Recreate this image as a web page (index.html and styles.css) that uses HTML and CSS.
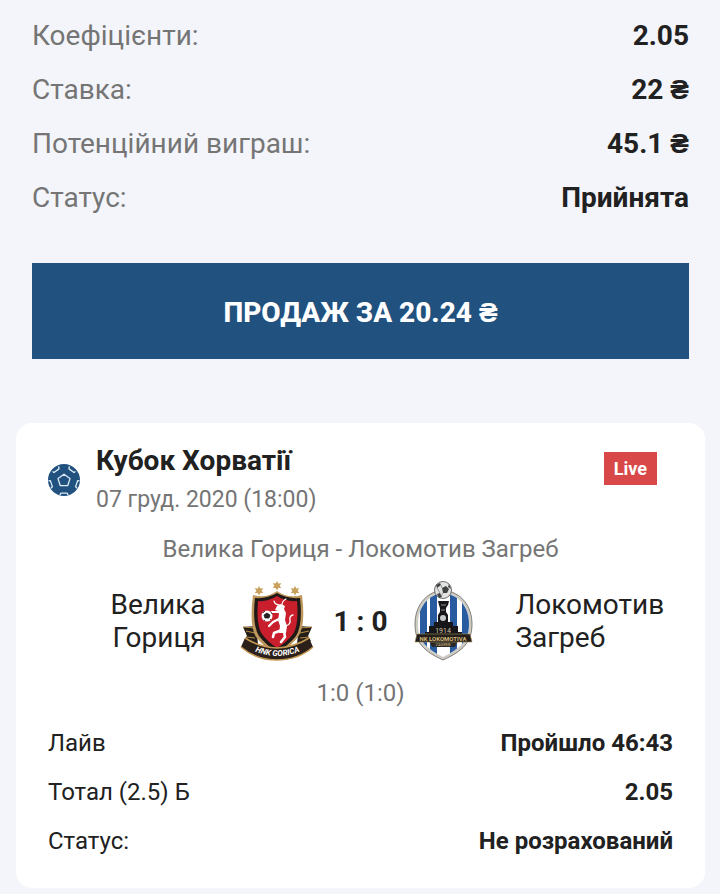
FILE: index.html
```html
<!DOCTYPE html>
<html lang="uk">
<head>
    <meta charset="UTF-8">
    <meta name="viewport" content="width=device-width, initial-scale=1.0">
    <title>Деталі ставки</title>
    <link rel="stylesheet" href="styles.css">
</head>
<body>
    <main class="bet-page">
        <!-- Bet summary -->
        <section class="bet-summary">
            <dl class="summary-list">
                <div class="summary-row">
                    <dt>Коефіцієнти:</dt>
                    <dd>2.05</dd>
                </div>
                <div class="summary-row">
                    <dt>Ставка:</dt>
                    <dd>22 ₴</dd>
                </div>
                <div class="summary-row">
                    <dt>Потенційний виграш:</dt>
                    <dd>45.1 ₴</dd>
                </div>
                <div class="summary-row">
                    <dt>Статус:</dt>
                    <dd>Прийнята</dd>
                </div>
            </dl>
            <button type="button" class="cashout-btn">ПРОДАЖ ЗА 20.24 ₴</button>
        </section>

        <!-- Match card -->
        <article class="match-card">
            <header class="match-header">
                <svg class="sport-icon" viewBox="0 0 32 32" aria-hidden="true">
                    <circle cx="16" cy="16" r="16" fill="#20517f"/>
                    <g fill="none" stroke="#dcebf5" stroke-width="1.3" stroke-linejoin="round">
                        <path d="M16 10.2l6 4.400-2.300 7.100h-7.400L10 14.600z"/>
                        <path d="M4.500 7.500l1.500 1 5-3.600-.3-2.600"/>
                        <path d="M27.500 7.500l-1.500 1-5-3.600.3-2.600"/>
                        <path d="M.4 16.800l2-.2 2 6.200-1.600 1.600"/>
                        <path d="M31.600 16.800l-2-.2-2 6.200 1.600 1.600"/>
                        <path d="M11.800 31.200l1-2h6.400l1 2"/>
                    </g>
                </svg>
                <div class="match-info">
                    <h2 class="match-title">Кубок Хорватії</h2>
                    <time class="match-date" datetime="2020-12-07T18:00">07 груд. 2020 (18:00)</time>
                </div>
                <span class="live-badge">Live</span>
            </header>

            <p class="match-name">Велика Гориця - Локомотив Загреб</p>

            <div class="scoreboard">
                <div class="team team-home">Велика Гориця</div>
                <svg class="crest" viewBox="0 0 80 80" role="img" aria-label="Велика Гориця">
                    <defs>
                        <path id="ribbonLine" d="M12 68Q39 82 67 68"/>
                    </defs>
                    <g fill="#c8a15c">
                        <path id="star" d="M39 0l1.300 2.500 3-.2-1.700 2.400 1.700 2.400-3-.2L39 9.400l-1.300-2.500-3 .2 1.700-2.400-1.700-2.400 3 .2z"/>
                        <use href="#star" x="-18" y="5"/>
                        <use href="#star" x="18" y="5"/>
                    </g>
                    <!-- side drapes -->
                    <path d="M5 46l13-1 2 18-14-3 3-5zM74 46l-13-1-2 18 14-3-3-5z" fill="#241d18"/>
                    <path d="M5 46l13 1M8 50l9 2M8 56l9 1M74 46l-13 1m10 3l-9 2m9 4l-9 1" stroke="#b58a42" stroke-width="1.2"/>
                    <!-- shield -->
                    <path d="M15 14Q28 18 39 10q11 8 25 4 4 31-4 42-8 10-21 18-13-8-21-18-7-11-3-42z" fill="#bd975b"/>
                    <path d="M17 17q12 1 22-5 10 6 23 5 3 27-4 38-7 9-19 16-11-7-18-16-7-11-4-38z" fill="#211917"/>
                    <path d="M20 20q10 1 19-5 9 6 20 5 2 24-4 33-6 8-16 14-9-6-15-14-6-9-4-33z" fill="#c91f2d"/>
                    <!-- goat with ball -->
                    <g fill="none" stroke="#fff" stroke-linecap="round" stroke-linejoin="round">
                        <path d="M42 24q-5 0-6-4M44 24q0-4 4-6" stroke-width="1.2"/>
                        <path d="M42 31l-8 0M43 37l-8 4-4 4" stroke-width="2.2"/>
                        <path d="M44 49l-8 3-1 4M46 50l1 6-4 5" stroke-width="2.6"/>
                        <path d="M48 45q5-2 4-6t3-5" stroke-width="1.3"/>
                    </g>
                    <path d="M39 25l4-2 4 2-1 3 2 4-1 7 2 6-1 7-7 0 1-7-2-6 1-6-1-3-3-1z" fill="#fff"/>
                    <circle cx="29" cy="35" r="5.5" fill="#fff"/>
                    <path d="M29 32l3 2-1 3h-4l-1-3zM25 32l2-2M33 31l1 2M26 39l1 1M32 39l1-1" fill="#222" stroke="#222" stroke-width=".8"/>
                    <!-- ribbon -->
                    <path d="M7 57q14 9 32 10 18-1 32-10l4 9q-15 13-36 13T3 66z" fill="#2b2019"/>
                    <path d="M7 57q14 9 32 10 18-1 32-10M3 66q15 13 36 13t36-13" fill="none" stroke="#c39854" stroke-width="1.6"/>
                    <text class="ribbon-text"><textPath href="#ribbonLine" startOffset="50%" text-anchor="middle">HNK GORICA</textPath></text>
                </svg>
                <strong class="score">1 : 0</strong>
                <svg class="crest" viewBox="0 0 80 80" role="img" aria-label="Локомотив Загреб">
                    <defs>
                        <clipPath id="shieldClip">
                            <path d="M40 12C24 14 15 27 15 43c0 16 7 24 25 33 18-9 26-17 26-33 0-16-9-29-26-31z"/>
                        </clipPath>
                    </defs>
                    <path d="M40 9C22 11 12 26 12 43c0 18 8 27 28 36 20-9 29-18 29-36C69 26 59 11 40 9z" fill="#cfccc6" stroke="#66645f" stroke-width=".8"/>
                    <g clip-path="url(#shieldClip)">
                        <path fill="#fff" d="M10 9h60v70H10z"/>
                        <path fill="#285b9f" d="M17 9h7v70h-7zM27 9h7v70h-7zM47 9h7v70h-7zM59 9h7v70h-7z"/>
                    </g>
                    <!-- locomotive -->
                    <path d="M35 20h11l-1 4-2 3v4l2 3v7h5v4h5v6h4v7H22v-7h4v-6h5v-4h4v-7l2-3v-4l-1-3z" fill="#171719"/>
                    <path d="M38 24h5M38 29h4" stroke="#8e9093" stroke-width="1"/>
                    <circle cx="40" cy="37" r="3" fill="#c7cacd"/>
                    <path d="M26 60h29l-3 6H29z" fill="#2c2a28"/>
                    <path d="M14 53h53l2 8H12z" fill="#231e19" stroke="#a38a5d" stroke-width=".6"/>
                    <text class="crest-year" x="40" y="52" text-anchor="middle">1914</text>
                    <text class="crest-name" x="40" y="60" text-anchor="middle">NK LOKOMOTIVA</text>
                    <text class="crest-city" x="40" y="65" text-anchor="middle">ZAGREB</text>
                    <!-- ball -->
                    <circle cx="40" cy="9" r="8.5" fill="#e2e3e2" stroke="#4c4c4b" stroke-width=".8"/>
                    <path d="M39 7l4-2 3 3-2 4h-4zM33 4l4-2 1 2-4 3zM46 3l2 5-3-2zM34 13l3-1 2 4-3 1z" fill="#414244"/>
                    <path d="M38 4l1 3m-5 0l3 5m3 0l-2 3" stroke="#777" stroke-width=".7"/>
                </svg>
                <div class="team team-away">Локомотив Загреб</div>
            </div>

            <p class="period-score">1:0 (1:0)</p>

            <dl class="detail-list">
                <div class="detail-row">
                    <dt>Лайв</dt>
                    <dd>Пройшло 46:43</dd>
                </div>
                <div class="detail-row">
                    <dt>Тотал (2.5) Б</dt>
                    <dd>2.05</dd>
                </div>
                <div class="detail-row">
                    <dt>Статус:</dt>
                    <dd>Не розрахований</dd>
                </div>
            </dl>
        </article>
    </main>
</body>
</html>
```
FILE: styles.css
```css
* {
    box-sizing: border-box;
    margin: 0;
    padding: 0;
}

body {
    background: #f4f5fa;
    color: #212121;
    font-family: Roboto, "Liberation Sans", sans-serif;
}

.bet-page {
    padding: 9px 15px 6px 16px;
}

/* Bet summary */
.bet-summary {
    padding: 0 16px;
}

.summary-row {
    display: flex;
    justify-content: space-between;
    font-size: 28px;
    line-height: 54px;
}

.summary-row dt {
    color: #757575;
}

.summary-row dd {
    font-weight: bold;
}

.cashout-btn {
    display: block;
    width: 100%;
    height: 96px;
    margin: 38px 0 64px;
    padding-top: 2px;
    border: none;
    background: #20517f;
    color: white;
    font-family: inherit;
    font-size: 28px;
    font-weight: 800;
    cursor: pointer;
}

/* Match card */
.match-card {
    padding: 18px 32px 22px;
    border-radius: 16px;
    background: white;
}

.match-header {
    display: flex;
    align-items: center;
    gap: 16px;
}

.sport-icon {
    width: 32px;
    height: 32px;
}

.match-info {
    flex: 1;
}

.match-title {
    font-size: 28px;
    font-weight: bold;
    line-height: 40px;
}

.match-date {
    display: block;
    color: #757575;
    font-size: 23px;
    line-height: 38px;
}

.live-badge {
    margin: 0 16px 24px 0;
    padding: 0 10px;
    background: #d84848;
    color: white;
    font-size: 18px;
    font-weight: bold;
    line-height: 33px;
}

.match-name,
.period-score {
    color: #757575;
    font-size: 24px;
    line-height: 32px;
    text-align: center;
}

.match-name {
    margin-top: 14px;
}

.scoreboard {
    display: grid;
    grid-template-columns: minmax(0, 1fr) 80px auto 80px minmax(0, 1fr);
    align-items: center;
    gap: 16px;
    margin-top: 16px;
}

.team {
    padding: 0 16px;
    font-size: 28px;
    line-height: 33px;
}

.team-home {
    text-align: right;
}

.team-away {
    padding-right: 0;
}

.crest {
    width: 80px;
    height: 80px;
}

.score {
    font-size: 28px;
    white-space: nowrap;
}

.ribbon-text {
    fill: white;
    font-size: 8px;
    font-weight: bold;
    font-style: italic;
}

.crest-year {
    fill: #d2c3a5;
    font-size: 7px;
}

.crest-name {
    fill: #d3b87b;
    font-size: 6px;
    font-weight: bold;
}

.crest-city {
    fill: #d3b87b;
    font-size: 4px;
}

.period-score {
    margin-top: 16px;
}

.detail-list {
    margin-top: 10px;
}

.detail-row {
    display: flex;
    justify-content: space-between;
    font-size: 24px;
    line-height: 49px;
}

.detail-row dd {
    font-weight: bold;
}
```
